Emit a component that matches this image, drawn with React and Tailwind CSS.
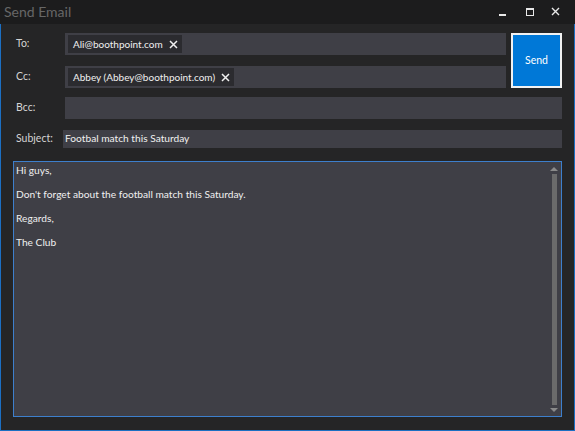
import React from "react";

const font = { fontFamily: 'Lato, "Noto Sans", sans-serif' };

function Chip({ text }) {
  return (
    <div className="ml-[3px] flex h-[18px] items-center gap-[6px] bg-[#2b2b2f] pl-[5px] pr-[4px] text-[10px] text-[#f0f0f0]">
      <span>{text}</span>
      <svg width="9" height="9" viewBox="0 0 9 9">
        <path d="M1 1L8 8M8 1L1 8" stroke="#f0f0f0" strokeWidth="1.5" />
      </svg>
    </div>
  );
}

function Row({ label, children, h = "h-[22px]", lw = "w-[52px]" }) {
  return (
    <div className="flex items-center">
      <div className={`${lw} shrink-0 pl-[3px] text-[10.5px] text-[#d4d4d4]`}>{label}</div>
      <div className={`flex flex-1 items-center bg-[#3f3f46] ${h}`}>{children}</div>
    </div>
  );
}

export default function App() {
  return (
    <div className="flex h-[431px] w-[575px] flex-col bg-[#252526]" style={font}>
      <div className="flex h-[24px] items-center bg-[#1c1c1d]">
        <div className="ml-[4px] text-[14px] leading-none text-[#676767]">Send Email</div>
        <div className="ml-auto flex items-center">
          <svg width="28" height="24" viewBox="0 0 28 24">
            <rect x="10" y="14" width="7" height="2" fill="#e8e8e8" />
          </svg>
          <svg width="26" height="24" viewBox="0 0 26 24">
            <rect x="9.5" y="8.5" width="7" height="7" fill="none" stroke="#e8e8e8" strokeWidth="1" />
            <rect x="9" y="8" width="8" height="2" fill="#e8e8e8" />
          </svg>
          <svg width="26" height="24" viewBox="0 0 26 24" className="mr-[6px]">
            <path d="M9 8L16 15M16 8L9 15" stroke="#e8e8e8" strokeWidth="1.4" />
          </svg>
        </div>
      </div>
      <div className="flex flex-1 flex-col border-x border-b border-[#1c6fc2] px-[12px] pt-[9px]">
        <div className="flex gap-[5px]">
          <div className="flex flex-1 flex-col gap-[11px]">
            <Row label="To:">
              <Chip text="Ali@boothpoint.com" />
            </Row>
            <Row label="Cc:">
              <Chip text="Abbey (Abbey@boothpoint.com)" />
            </Row>
          </div>
          <button className="flex h-[55px] w-[51px] items-center justify-center border-2 border-[#f2f2f2] bg-[#0078d7] text-[10.5px] text-white">
            Send
          </button>
        </div>
        <div className="mt-[9px]">
          <Row label="Bcc:" />
        </div>
        <div className="mt-[11px]">
          <Row label="Subject:" h="h-[18px]" lw="w-[50px]">
            <span className="pl-[2px] text-[10.2px] text-[#f0f0f0]">Footbal match this Saturday</span>
          </Row>
        </div>
        <div className="mt-[13px] flex h-[256px] border border-[#3d7fcc] bg-[#3f3f46]">
          <div className="flex-1 pl-[2px] pt-[2px] text-[10.2px] text-[#f0f0f0]">
            <div className="leading-[12px]">Hi guys,</div>
            <div className="mt-[12px] leading-[12px]">Don't forget about the football match this Saturday.</div>
            <div className="mt-[12px] leading-[12px]">Regards,</div>
            <div className="mt-[12px] leading-[12px]">The Club</div>
          </div>
          <div className="flex w-[12px] flex-col items-center pb-[3px] pt-[4px] pr-[2px]">
            <svg width="8" height="5" viewBox="0 0 8 5">
              <path d="M0 5L4 1L8 5Z" fill="#8a8a8a" />
            </svg>
            <div className="my-[3px] w-[5px] flex-1 bg-[#6b6b6b]" />
            <svg width="8" height="5" viewBox="0 0 8 5">
              <path d="M0 0L8 0L4 4Z" fill="#8a8a8a" />
            </svg>
          </div>
        </div>
      </div>
    </div>
  );
}
